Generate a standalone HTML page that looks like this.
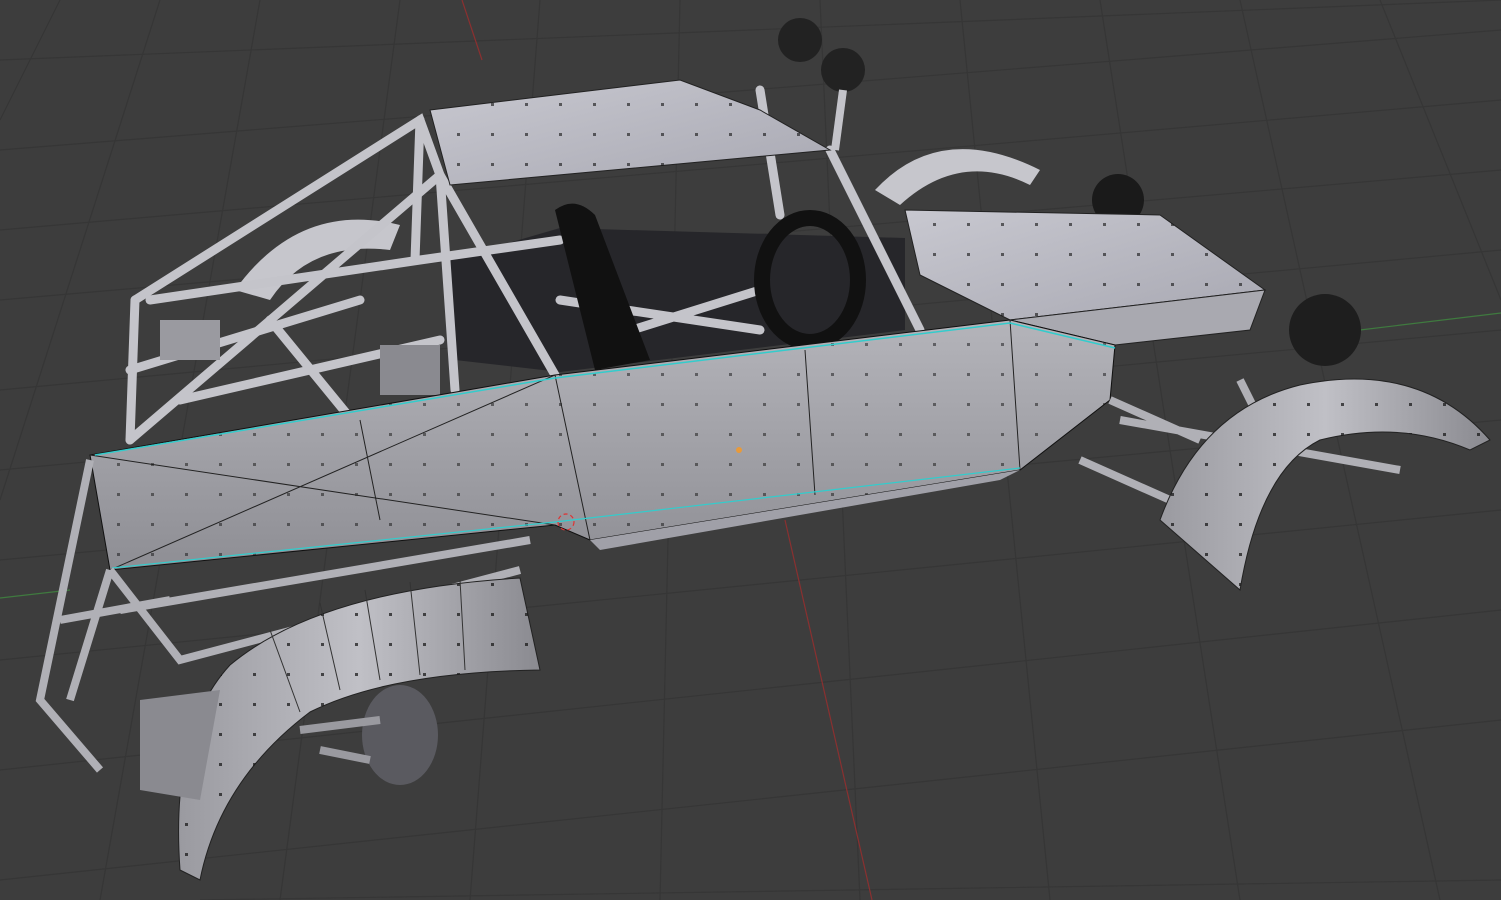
<!DOCTYPE html>
<html><head><meta charset="utf-8"><style>
html,body{margin:0;padding:0;background:#3d3d3d;overflow:hidden}
svg{display:block}
</style></head><body>
<svg width="1501" height="900" viewBox="0 0 1501 900" xmlns="http://www.w3.org/2000/svg">
<defs>
<linearGradient id="side" x1="0" y1="0" x2="0" y2="1"><stop offset="0" stop-color="#b4b4ba"/><stop offset="1" stop-color="#8e8e94"/></linearGradient>
<linearGradient id="top" x1="0" y1="0" x2="1" y2="1"><stop offset="0" stop-color="#c8c8d0"/><stop offset="1" stop-color="#a8a8b2"/></linearGradient>
<linearGradient id="fender" x1="0" y1="0" x2="1" y2="0"><stop offset="0" stop-color="#9a9aa0"/><stop offset="0.5" stop-color="#c0c0c6"/><stop offset="1" stop-color="#8a8a90"/></linearGradient>
<pattern id="dots" width="34" height="30" patternUnits="userSpaceOnUse"><rect x="15" y="13" width="3" height="3" fill="#111"/></pattern>
</defs>
<rect width="1501" height="900" fill="#3d3d3d"/>
<g stroke="#363636" stroke-width="1.2" fill="none">
<path d="M0 150 L1501 30 M0 300 L1501 170 M0 470 L1501 330 M0 660 L1501 510 M0 880 L1501 720 M200 900 L1501 880"/>
<path d="M60 0 L0 120 M260 0 L100 900 M540 0 L470 900 M820 0 L860 900 M1100 0 L1240 900 M1380 0 L1501 300"/>
<path d="M0 60 L1501 0 M0 230 L1501 100 M0 390 L1501 250 M0 560 L1501 420 M0 770 L1501 610"/>
<path d="M160 0 L0 500 M400 0 L280 900 M680 0 L660 900 M960 0 L1050 900 M1240 0 L1440 900"/>
</g>
<line x1="462" y1="0" x2="482" y2="60" stroke="#8a3030" stroke-width="1.2"/>
<line x1="785" y1="520" x2="872" y2="900" stroke="#8a3030" stroke-width="1.2"/>
<line x1="0" y1="598" x2="70" y2="590" stroke="#3f7a3f" stroke-width="1.2"/>
<line x1="1360" y1="330" x2="1501" y2="313" stroke="#3f7a3f" stroke-width="1.2"/>
<!-- rear fenders -->
<path d="M235 290 Q300 200 400 225 L390 250 Q310 240 270 300 Z" fill="#c6c6cc"/>
<path d="M875 190 Q940 120 1040 170 L1030 185 Q960 150 900 205 Z" fill="#c6c6cc"/>
<!-- interior -->
<polygon points="450,260 560,228 905,238 905,330 560,372 455,360" fill="#26262a"/>
<!-- cage -->
<g stroke="#c4c4ca" stroke-width="9" fill="none" stroke-linecap="round">
<path d="M135 300 L420 120 L440 175 L130 440"/>
<path d="M135 300 L130 440 M420 120 L415 260 M440 175 L555 375 M440 175 L455 390 M760 90 L780 215"/>
<path d="M150 300 L420 260 L560 240 M180 400 L440 340 M270 320 L360 430 M130 370 L360 300"/>
<path d="M830 150 L920 330 M560 300 L760 330 M600 340 L760 290"/>
</g>
<rect x="160" y="320" width="60" height="40" fill="#9a9aa0"/>
<rect x="380" y="345" width="60" height="50" fill="#8a8a90"/>
<!-- roof -->
<polygon points="430,110 680,80 760,110 830,150 450,185" fill="url(#top)" stroke="#222" stroke-width="1"/>
<polygon points="430,110 680,80 760,110 830,150 450,185" fill="url(#dots)" opacity="0.6"/>
<!-- seat & steering -->
<path d="M555 210 Q575 195 595 215 L650 360 L595 370 Z" fill="#111"/>
<ellipse cx="810" cy="280" rx="48" ry="62" fill="none" stroke="#111" stroke-width="16"/>
<circle cx="1118" cy="200" r="26" fill="#1a1a1a"/>
<circle cx="1325" cy="330" r="36" fill="#1e1e1e"/>
<circle cx="800" cy="40" r="22" fill="#222"/><circle cx="843" cy="70" r="22" fill="#222"/>
<line x1="843" y1="90" x2="835" y2="150" stroke="#c4c4ca" stroke-width="8"/>
<!-- hood -->
<polygon points="905,210 1160,215 1265,290 1010,320 920,275" fill="url(#top)" stroke="#222"/>
<polygon points="905,210 1160,215 1265,290 1010,320 920,275" fill="url(#dots)" opacity="0.6"/>
<polygon points="1010,320 1265,290 1250,330 1115,345" fill="#a9a9b0" stroke="#222"/>
<!-- side panel -->
<polygon points="90,455 555,375 1010,320 1115,345 1110,400 1020,470 590,540 555,525 110,570" fill="url(#side)" stroke="#111"/>
<polygon points="90,455 555,375 1010,320 1115,345 1110,400 1020,470 590,540 555,525 110,570" fill="url(#dots)" opacity="0.5"/>
<g stroke="#222" stroke-width="1" fill="none">
<path d="M555 375 L590 540 M805 350 L815 495 M360 420 L380 520 M1010 320 L1020 470 M90 455 L555 525 M555 375 L110 570"/>
</g>
<path d="M95 455 L555 378 L1010 323 L1115 348" stroke="#3cc" stroke-width="1.5" fill="none"/>
<path d="M112 568 L555 522 L1020 468" stroke="#3cc" stroke-width="1.2" fill="none"/>
<!-- lower frame -->
<g stroke="#b0b0b6" stroke-width="8" fill="none">
<path d="M90 460 L40 700 L100 770 M110 570 L70 700 M110 570 L180 660 L520 570 M120 610 L530 540 M60 620 L170 600"/>
<path d="M1110 400 L1200 440 M1120 420 L1400 470 M1080 460 L1170 500 M1240 380 L1260 420"/>
</g>
<polygon points="590,540 1020,470 1000,480 600,550" fill="#a0a0a8"/>
<!-- front wheel/suspension -->
<ellipse cx="400" cy="735" rx="38" ry="50" fill="#5a5a60"/>
<path d="M300 730 L380 720 M320 750 L370 760" stroke="#9a9aa0" stroke-width="8"/>
<!-- front fender -->
<path d="M180 870 Q170 730 230 665 Q320 590 520 578 L540 670 Q390 672 310 712 Q220 780 200 880 Z" fill="url(#fender)" stroke="#222"/>
<path d="M180 870 Q170 730 230 665 Q320 590 520 578 L540 670 Q390 672 310 712 Q220 780 200 880 Z" fill="url(#dots)" opacity="0.7"/>
<g stroke="#333" stroke-width="1" fill="none"><path d="M270 630 L300 712 M320 603 L340 690 M365 590 L380 680 M410 582 L420 675 M460 580 L465 670"/></g>
<polygon points="140,700 220,690 200,800 140,790" fill="#8a8a90"/>
<!-- rear-right fender -->
<path d="M1160 520 Q1200 410 1300 385 Q1420 360 1490 440 L1470 450 Q1400 420 1320 440 Q1260 470 1240 590 Z" fill="url(#fender)" stroke="#222"/>
<path d="M1160 520 Q1200 410 1300 385 Q1420 360 1490 440 L1470 450 Q1400 420 1320 440 Q1260 470 1240 590 Z" fill="url(#dots)" opacity="0.7"/>
<circle cx="739" cy="450" r="3" fill="#e89a3a"/>
<circle cx="566" cy="522" r="8" fill="none" stroke="#d33" stroke-width="1.2" stroke-dasharray="4 3"/>
</svg>
</body></html>
